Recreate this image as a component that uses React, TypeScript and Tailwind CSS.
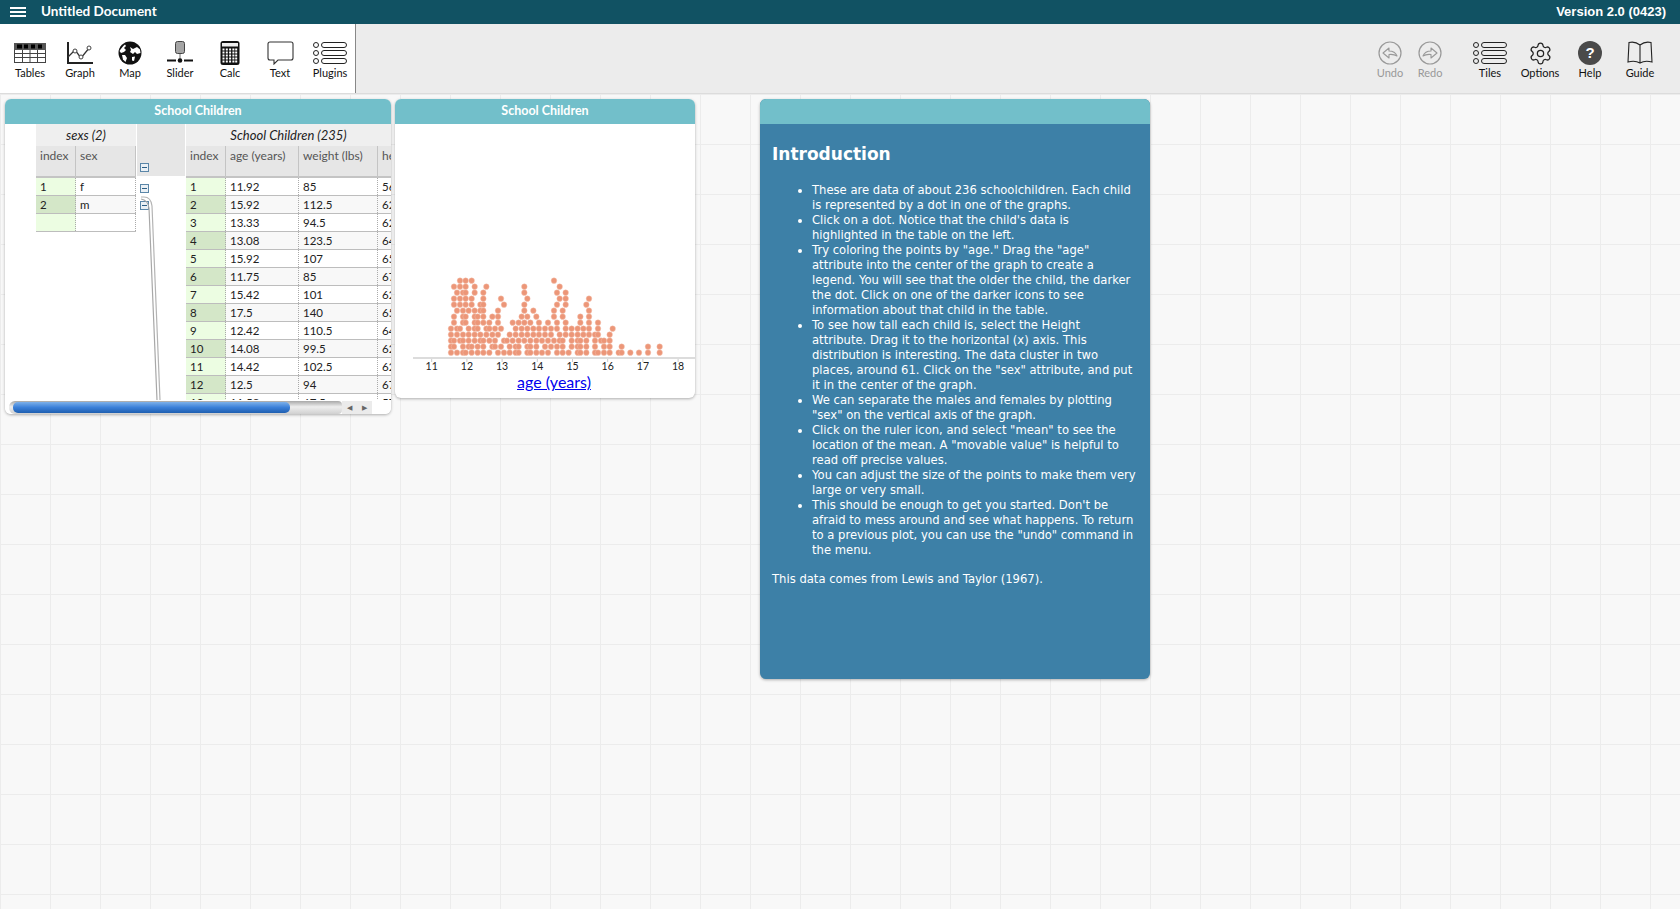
import React from "react";
import { Settings } from "lucide-react";

const sans = "font-['Lato','Liberation_Sans',sans-serif]";

const Tables = () => (
  <svg width="32" height="20" viewBox="0 0 32 20">
    <rect x="0.5" y="0.5" width="31" height="19" fill="#fff" stroke="#444" />
    <rect x="0" y="0" width="32" height="7" fill="#555" />
    <rect x="3" y="1.5" width="5" height="4" fill="#000" />
    <rect x="10" y="1.5" width="4" height="4" fill="#000" />
    <rect x="17" y="1.5" width="4" height="4" fill="#000" />
    <rect x="24" y="1.5" width="4" height="4" fill="#000" />
    <path d="M0 10.5H32M0 14.5H32M8.5 7V20M16 7V20M23.5 7V20" stroke="#444" fill="none" />
  </svg>
);
const Graph = () => (
  <svg width="28" height="24" viewBox="0 0 28 24">
    <path d="M2 1V22H27" stroke="#222" strokeWidth="2" fill="none" />
    <path d="M2 16L9 9L15 17L24 6" stroke="#333" strokeWidth="1.3" fill="none" />
    <circle cx="9" cy="10" r="2" fill="#fff" stroke="#444" />
    <circle cx="15" cy="16" r="2" fill="#fff" stroke="#444" />
    <circle cx="23" cy="7" r="2" fill="#fff" stroke="#444" />
  </svg>
);
const MapIcon = () => (
  <svg width="24" height="24" viewBox="0 0 24 24">
    <circle cx="12" cy="12" r="11.5" fill="#111" />
    <path d="M1.5 10C3 8 5 5 7 3.5L8 5L6 7L8 9L6 11L3 12Z" fill="#fff" />
    <path d="M12 6L15 8L19 6L22 8.5L22.5 12L19 13L17 11L15 13L12 11L13 9Z" fill="#fff" />
    <path d="M4 14L7 14L9 17L7.5 21L5 18.5Z" fill="#fff" />
    <path d="M14 16L17 15.5L16 20L14 19.5Z" fill="#fff" />
  </svg>
);
const Slider = () => (
  <svg width="28" height="24" viewBox="0 0 28 24">
    <rect x="9.5" y="0.5" width="9" height="12" rx="2" fill="#a5a5a5" stroke="#444" />
    <path d="M14 13V18" stroke="#666" />
    <path d="M1 19.5H10M18 19.5H27" stroke="#111" strokeWidth="2.2" />
    <circle cx="14" cy="19.5" r="2.3" fill="#111" />
  </svg>
);
const Calc = () => (
  <svg width="20" height="24" viewBox="0 0 20 24">
    <rect x="0.5" y="0" width="19" height="24" rx="2.5" fill="#111" />
    <rect x="2" y="2" width="16" height="3.5" fill="#eee" />
    {[8, 11, 14, 17, 20].map((y) =>
      [2.5, 5.8, 9.1, 12.4, 15.2].map((x) => (
        <rect key={`${x}-${y}`} x={x} y={y - 0.5} width="2" height="2" fill="#fff" />
      ))
    )}
  </svg>
);
const TextIcon = () => (
  <svg width="27" height="24" viewBox="0 0 27 24">
    <path d="M3 1H24Q26 1 26 3V17Q26 19 24 19H11L7 23L7 19H3Q1 19 1 17V3Q1 1 3 1Z" fill="#fff" stroke="#333" strokeWidth="1.1" />
  </svg>
);
const Rows = ({ w = 34 }: { w?: number }) => (
  <svg width={w} height="24" viewBox="0 0 34 24">
    {[4, 12, 20].map((y) => (
      <g key={y}>
        <circle cx="3" cy={y} r="2.5" fill="none" stroke="#222" />
        <rect x="8.5" y={y - 2.5} width="25" height="5" rx="2.5" fill="none" stroke="#222" />
      </g>
    ))}
  </svg>
);
const Undo = ({ flip }: { flip?: boolean }) => (
  <svg width="24" height="24" viewBox="0 0 24 24" className={flip ? "-scale-x-100" : ""}>
    <circle cx="12" cy="12" r="11" fill="none" stroke="#999" strokeWidth="1.2" />
    <path d="M5 12L11 7V10Q17 10 19 15Q16 13 11 13.5V17Z" fill="none" stroke="#999" strokeWidth="1.1" strokeLinejoin="round" />
  </svg>
);
const Help = () => (
  <div className="flex h-6 w-6 items-center justify-center rounded-full bg-[#4a4a4a] font-['Liberation_Sans',sans-serif] text-[15px] font-bold text-white">
    ?
  </div>
);
const Guide = () => (
  <svg width="26" height="24" viewBox="0 0 26 24">
    <path d="M13 4Q8 0 2 1.5L1 21Q8 19 13 22Q18 19 25 21L24 1.5Q18 0 13 4V22" fill="none" stroke="#222" strokeWidth="1.1" />
  </svg>
);

const Tool = ({ icon, label, muted, w = "w-[50px]" }: { icon: React.ReactNode; label: string; muted?: boolean; w?: string }) => (
  <div className={`flex ${w} flex-col items-center`}>
    <div className="flex h-[24px] items-center justify-center">{icon}</div>
    <div className={`mt-px text-[11px] leading-[14px] ${muted ? "text-[#999]" : "text-[#111]"}`}>{label}</div>
  </div>
);

const sexRows = [["1", "f"], ["2", "m"], ["", ""]];
const kidRows = [
  ["1", "11.92", "85", "56"],
  ["2", "15.92", "112.5", "62"],
  ["3", "13.33", "94.5", "62"],
  ["4", "13.08", "123.5", "64"],
  ["5", "15.92", "107", "65"],
  ["6", "11.75", "85", "67"],
  ["7", "15.42", "101", "62"],
  ["8", "17.5", "140", "65"],
  ["9", "12.42", "110.5", "64"],
  ["10", "14.08", "99.5", "62"],
  ["11", "14.42", "102.5", "62"],
  ["12", "12.5", "94", "67"],
  ["13", "11.58", "67.5", "57"],
];

const Collapse = () => (
  <div className="flex h-[9px] w-[9px] items-center justify-center border border-[#5a86a8] bg-[#eaf0f5]">
    <div className="h-px w-[5px] bg-[#2d5f85]" />
  </div>
);

const Head = ({ w, children }: { w: string; children?: React.ReactNode }) => (
  <div className={`${w} shrink-0 border-r border-b-2 border-[#c4c4c4] bg-[#e6e6e6] pl-1 pt-[2px] text-[12px] leading-[16px] text-[#555]`}>
    {children}
  </div>
);

const Row = ({ i, cells, widths }: { i: number; cells: string[]; widths: string[] }) => (
  <div className="flex h-[18px] border-b border-[#bdbdbd] text-[11.5px] leading-[18px] text-[#222]">
    <div className={`${widths[0]} shrink-0 border-r border-dotted border-[#aaa] pl-[4px] ${i % 2 ? "bg-[#d4e7c8]" : "bg-[#ecfde2]"}`}>{cells[0]}</div>
    {cells.slice(1).map((c, k) => (
      <div key={k} className={`${widths[k + 1]} shrink-0 border-r border-dotted border-[#aaa] pl-[4px] ${i % 2 ? "bg-[#f8f8f8]" : "bg-white"}`}>
        {c}
      </div>
    ))}
  </div>
);

const TitleBar = ({ children }: { children?: React.ReactNode }) => (
  <div className={`flex h-[25px] shrink-0 items-center justify-center bg-[#72bfca] text-[12.5px] font-bold text-white ${sans}`}>{children}</div>
);

const tile = "absolute flex flex-col overflow-hidden rounded-[6px] shadow-[0_1px_3px_rgba(0,0,0,0.3)]";

// dot rows, [centre y in zoom px, xs in zoom px], reference origin (445,275) at 3x
const L: [number, number[]][] = [
  [17, [45, 62, 80]],
  [35, [27, 45, 62, 89, 124, 238]],
  [53, [36, 54, 62, 89, 115, 238]],
  [71, [27, 45, 62, 80, 115, 168, 247]],
  [89, [27, 45, 62, 80, 106, 115, 177, 238]],
  [107, [36, 54, 71, 89, 106, 115, 159, 238, 265]],
  [125, [27, 54, 62, 89, 98, 115, 142, 159, 230, 247, 274]],
  [143, [27, 54, 62, 89, 98, 115, 133, 159, 203, 221, 238, 256, 282, 309]],
  [161, [18, 36, 45, 71, 89, 98, 124, 133, 150, 168, 212, 230, 247, 265, 282, 300, 318]],
  [179, [18, 36, 54, 71, 89, 106, 124, 142, 159, 194, 212, 230, 247, 265, 282, 300, 318]],
  [197, [18, 27, 45, 54, 71, 89, 106, 115, 133, 150, 177, 186, 203, 221, 238, 256, 274, 291, 309]],
  [215, [18, 27, 54, 71, 80, 98, 115, 142, 150, 168, 194, 212, 221, 247, 256, 274, 300, 318]],
  [233, [18, 36, 54, 62, 80, 98, 115, 133, 159, 177, 194, 212, 221, 247, 256, 274, 291, 309]],
];
// same rows, origin (545,275)
const R: [number, number[]][] = [
  [17, [27]],
  [35, [44]],
  [53, [36, 62]],
  [71, [44, 62, 132]],
  [89, [36, 62, 124]],
  [107, [27, 53, 132]],
  [125, [27, 53, 106, 132]],
  [143, [36, 62, 106, 132, 159]],
  [161, [36, 62, 80, 98, 115, 132, 159, 203]],
  [179, [44, 62, 80, 98, 115, 132, 150, 159, 194]],
  [197, [27, 44, 53, 80, 98, 106, 124, 150, 168, 177, 194]],
  [215, [36, 53, 80, 98, 106, 124, 150, 177, 194, 230, 309, 344]],
  [233, [36, 53, 71, 98, 106, 124, 150, 159, 177, 194, 221, 230, 256, 282, 309, 344]],
];
const dots: [number, number][] = [
  ...L.flatMap(([y, xs]) => xs.map((x) => [445 + x / 3, 275 + y / 3] as [number, number])),
  ...R.flatMap(([y, xs]) => xs.map((x) => [545 + x / 3, 275 + y / 3] as [number, number])),
];

const Plot = () => (
  <svg width="300" height="250" viewBox="395 124 300 250" className="block">
    <rect x="413" y="357" width="282" height="2" fill="#dcdcdc" />
    {[11, 12, 13, 14, 15, 16, 17, 18].map((t, i) => {
      const x = 431.7 + 35.2 * i;
      return (
        <g key={t}>
          <path d={`M${x} 359V362`} stroke="#ccc" />
          <text x={x} y={370} textAnchor="middle" fontSize="10.5" fill="#222" fontFamily="Lato, sans-serif">
            {t}
          </text>
        </g>
      );
    })}
    {dots.map(([x, y], i) => (
      <circle key={i} cx={x} cy={y} r="2.8" fill="#ec9678" stroke="#f5c4b2" strokeWidth="0.4" />
    ))}
  </svg>
);

const items = [
  "These are data of about 236 schoolchildren. Each child is represented by a dot in one of the graphs.",
  "Click on a dot. Notice that the child's data is\nhighlighted in the table on the left.",
  'Try coloring the points by "age." Drag the "age" attribute into the center of the graph to create a legend. You will see that the older the child, the darker the dot. Click on one of the darker icons to see information about that child in the table.',
  'To see how tall each child is, select the Height\nattribute. Drag it to the horizontal (x) axis. This\ndistribution is interesting. The data cluster in two\nplaces, around 61. Click on the "sex" attribute, and put\nit in the center of the graph.',
  'We can separate the males and females by plotting "sex" on the vertical axis of the graph.',
  'Click on the ruler icon, and select "mean" to see the location of the mean. A "movable value" is helpful to read off precise values.',
  "You can adjust the size of the points to make them very large or very small.",
  'This should be enough to get you started. Don\'t be afraid to mess around and see what happens. To return to a previous plot, you can use the "undo" command in the menu.',
];

export default function App() {
  return (
    <div className={`flex h-screen w-full flex-col overflow-hidden bg-[#f8f8f8] ${sans}`}>
      <header className="flex h-[24px] shrink-0 items-center bg-[#115263] pb-px pl-[10px] pr-[14px] text-white">
        <div className="flex w-[16px] flex-col gap-[2px]">
          <div className="h-[2px] bg-white" />
          <div className="h-[2px] bg-white" />
          <div className="h-[2px] bg-white" />
        </div>
        <div className="ml-[15px] text-[13.5px] font-bold">Untitled Document</div>
        <div className="ml-auto font-['Liberation_Sans',sans-serif] text-[13px] font-bold">Version 2.0 (0423)</div>
      </header>

      <div className="flex h-[70px] shrink-0 border-b border-[#dcdcdc] bg-[#ececec]">
        <div className="flex w-[356px] items-start border-r border-[#888] bg-white pl-[5px] pt-[17px]">
          <Tool icon={<Tables />} label="Tables" />
          <Tool icon={<Graph />} label="Graph" />
          <Tool icon={<MapIcon />} label="Map" />
          <Tool icon={<Slider />} label="Slider" />
          <Tool icon={<Calc />} label="Calc" />
          <Tool icon={<TextIcon />} label="Text" />
          <Tool icon={<Rows />} label="Plugins" />
        </div>
        <div className="ml-auto flex items-start pr-[15px] pt-[17px]">
          <Tool w="w-[40px]" muted icon={<Undo />} label="Undo" />
          <Tool w="w-[40px]" muted icon={<Undo flip />} label="Redo" />
          <div className="w-[15px]" />
          <Tool icon={<Rows />} label="Tiles" />
          <Tool icon={<Settings size={25} strokeWidth={1.2} color="#222" />} label="Options" />
          <Tool icon={<Help />} label="Help" />
          <Tool icon={<Guide />} label="Guide" />
        </div>
      </div>

      <main className="relative flex-1 bg-[linear-gradient(#ececec_1px,transparent_1px),linear-gradient(90deg,#ececec_1px,transparent_1px)] bg-[size:50px_50px] bg-[position:0_0]">
        {/* table tile */}
        <section className={`${tile} left-[5px] top-[5px] h-[315px] w-[386px] bg-white`}>
          <TitleBar>School Children</TitleBar>
          <div className="relative flex h-[276px] overflow-hidden bg-white pl-[31px]">
            <div className="w-[100px] shrink-0">
              <div className="flex h-[22px] items-center justify-center bg-[#efefef] pt-px text-[13px] italic text-[#222]">sexs (2)</div>
              <div className="flex h-[32px]">
                <Head w="w-[40px]">index</Head>
                <Head w="w-[60px]">sex</Head>
              </div>
              {sexRows.map((r, i) => (
                <Row key={i} i={i} cells={r} widths={["w-[40px]", "w-[60px]"]} />
              ))}
            </div>
            <div className="flex w-[50px] shrink-0 flex-col">
              <div className="flex h-[54px] shrink-0 flex-col justify-end border-x border-b-2 border-white bg-[#e6e6e6] pb-[4px] pl-[3px]">
                <Collapse />
              </div>
              <div className="flex flex-col gap-[8px] pl-[4px] pt-[6px]">
                <Collapse />
                <Collapse />
              </div>
            </div>
            <div className="w-[205px] shrink-0 overflow-hidden">
              <div className="flex h-[22px] items-center justify-center bg-[#efefef] pt-px text-[13px] italic text-[#222]">School Children (235)</div>
              <div className="flex h-[32px] w-[260px]">
                <Head w="w-[40px]">index</Head>
                <Head w="w-[73px]">age (years)</Head>
                <Head w="w-[79px]">weight (lbs)</Head>
                <Head w="w-[68px]">height (in)</Head>
              </div>
              <div className="w-[260px]">
                {kidRows.map((r, i) => (
                  <Row key={i} i={i} cells={r} widths={["w-[40px]", "w-[73px]", "w-[79px]", "w-[68px]"]} />
                ))}
              </div>
            </div>
            <svg width="30" height="206" viewBox="0 0 30 206" className="absolute left-[130px] top-[70px]" fill="none">
              <path d="M6 3H9Q16 3 17 12L25 206" stroke="#b4b4b4" strokeWidth="1.2" />
              <path d="M6 5Q13 6 14 14L22 206" stroke="#a8a8a8" strokeWidth="1.2" />
            </svg>
          </div>
          <div className="flex h-[14px] shrink-0 items-center bg-white pl-[4px]">
            <div className="relative h-[13px] w-[333px] rounded-l-[6px] rounded-r-[4px] bg-[linear-gradient(#a8a8a8,#eeeeee_45%,#d0d0d0)]">
              <div className="absolute left-[4px] top-[1px] h-[11px] w-[277px] rounded-[5px] bg-[linear-gradient(#7cb0ea,#3a7fd8_50%,#1f5fb0)]" />
            </div>
            <div className="flex h-[13px] w-[30px] items-center justify-around bg-[#ebebeb] text-[7px] text-[#666]">
              <span>◀</span>
              <span>▶</span>
            </div>
          </div>
        </section>

        {/* graph tile */}
        <section className={`${tile} left-[395px] top-[5px] h-[299px] w-[300px] bg-white`}>
          <TitleBar>School Children</TitleBar>
          <Plot />
          <div className="relative top-[-1px] pl-[18px] text-center text-[16px] leading-[18px] text-[#0000ee] underline">age (years)</div>
        </section>

        {/* text tile */}
        <section className={`${tile} left-[760px] top-[5px] h-[580px] w-[390px] bg-[#3d80a7]`}>
          <TitleBar />
          <div className="px-[12px] pt-[18px] font-['DejaVu_Sans',sans-serif] text-[11.6px] leading-[15px] text-white">
            <h1 className="text-[17px] font-bold leading-[24px]">Introduction</h1>
            <ul className="mt-[17px] list-disc pl-[40px]">
              {items.map((t) => (
                <li key={t} className="whitespace-pre-line">{t}</li>
              ))}
            </ul>
            <p className="mt-[14px]">This data comes from Lewis and Taylor (1967).</p>
          </div>
        </section>
      </main>
    </div>
  );
}
